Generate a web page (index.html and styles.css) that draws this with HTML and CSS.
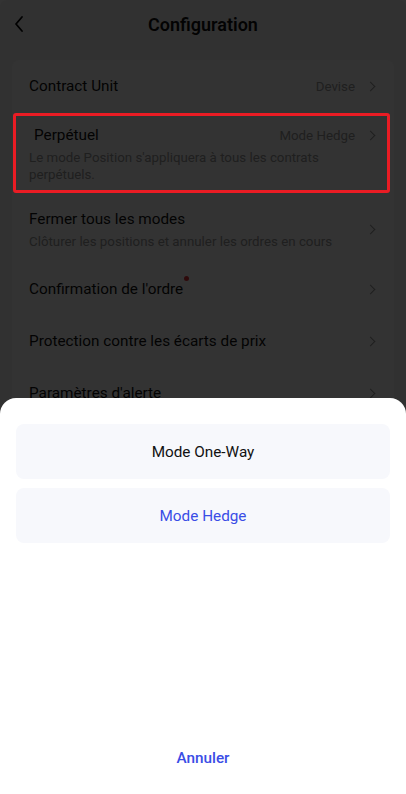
FILE: index.html
```html
<!DOCTYPE html>
<html lang="fr">
<head>
  <meta charset="UTF-8">
  <meta name="viewport" content="width=device-width, initial-scale=1.0">
  <title>Configuration</title>
  <link rel="stylesheet" href="styles.css">
</head>
<body>
  <div class="page">
    <div class="header">
      <svg class="back" width="12" height="18" viewBox="0 0 12 18"><path d="M9 2 L3 9 L9 16" fill="none" stroke="#000" stroke-width="1.8" stroke-linecap="round" stroke-linejoin="round"/></svg>
      <h1>Configuration</h1>
    </div>

    <div class="card">
      <div class="row">
        <span class="title">Contract Unit</span>
        <span class="side"><span class="value">Devise</span><span class="chev"></span></span>
      </div>

      <div class="row multi stack">
        <div class="head">
          <span class="title indent">Perpétuel</span>
          <span class="side"><span class="value">Mode Hedge</span><span class="chev"></span></span>
        </div>
        <div class="sub wide">Le mode Position s'appliquera à tous les contrats perpétuels.</div>
      </div>

      <div class="row multi">
        <div class="text">
          <div class="title">Fermer tous les modes</div>
          <div class="sub">Clôturer les positions et annuler les ordres en cours</div>
        </div>
        <span class="side"><span class="chev"></span></span>
      </div>

      <div class="row">
        <span class="title">Confirmation de l'ordre<span class="dot"></span></span>
        <span class="side"><span class="chev"></span></span>
      </div>

      <div class="row">
        <span class="title">Protection contre les écarts de prix</span>
        <span class="side"><span class="chev"></span></span>
      </div>

      <div class="row">
        <span class="title">Paramètres d'alerte</span>
        <span class="side"><span class="chev"></span></span>
      </div>
    </div>
  </div>

  <div class="mask"></div>
  <div class="highlight"></div>

  <div class="sheet">
    <div class="option">Mode One-Way</div>
    <div class="option active">Mode Hedge</div>
    <div class="cancel">Annuler</div>
  </div>
</body>
</html>
```

FILE: styles.css
```css
body { margin: 0; font-family: Roboto, "Noto Sans", Arial, sans-serif; color: #111; }
.page { height: 794px; overflow: hidden; background: #f6f6f6; border-radius: 6px 6px 0 0; }

.header { height: 48px; display: flex; align-items: center; justify-content: center; position: relative; }
.header h1 { margin: 0; font-size: 18px; font-weight: 600; }
.back { position: absolute; left: 13px; top: 15px; }

.card { margin: 12px 12px 0; background: #fff; border-radius: 8px; }
.row { display: flex; align-items: center; justify-content: space-between; min-height: 52px; padding: 0 17px; box-sizing: border-box; }
.row.multi { padding-top: 12px; padding-bottom: 13px; }
.row.stack { flex-direction: column; align-items: stretch; }
.head { display: flex; justify-content: space-between; align-items: center; }
.text { flex: 1; padding-right: 20px; }
.title { font-size: 15.3px; line-height: 22px; color: #111; position: relative; }
.title.indent { margin-left: 5px; }
.sub { margin-top: 3px; font-size: 13.3px; line-height: 17px; color: #9a9a9a; }
.sub.wide { padding-right: 40px; }
.side { display: flex; align-items: center; height: 22px; flex-shrink: 0; }
.value { font-size: 13.3px; color: #9a9a9a; margin-right: 12px; }
.chev { width: 6px; height: 6px; border-top: 1.5px solid #999; border-right: 1.5px solid #999; transform: rotate(45deg); margin-right: 3px; }
.dot { position: absolute; top: -2px; right: -6px; width: 5px; height: 5px; border-radius: 50%; background: #e5333b; }

.mask { position: absolute; inset: 0; background: rgba(0, 0, 0, 0.8); }
.highlight { position: absolute; left: 13px; top: 113px; width: 371px; height: 74px; border: 3px solid #ea1c24; border-radius: 3px; }

.sheet { position: absolute; left: 0; right: 0; top: 398px; bottom: 0; background: #fff; border-radius: 16px 16px 0 0; padding: 26px 16px 0; box-sizing: border-box; display: flex; flex-direction: column; gap: 9px; }
.option { height: 55px; border-radius: 8px; background: #f7f8fc; display: flex; align-items: center; justify-content: center; font-size: 15.3px; color: #111; }
.option.active { color: #3a4de6; }
.cancel { margin-top: auto; margin-bottom: 27px; text-align: center; font-size: 15.3px; font-weight: 500; color: #3a4de6; }
```
